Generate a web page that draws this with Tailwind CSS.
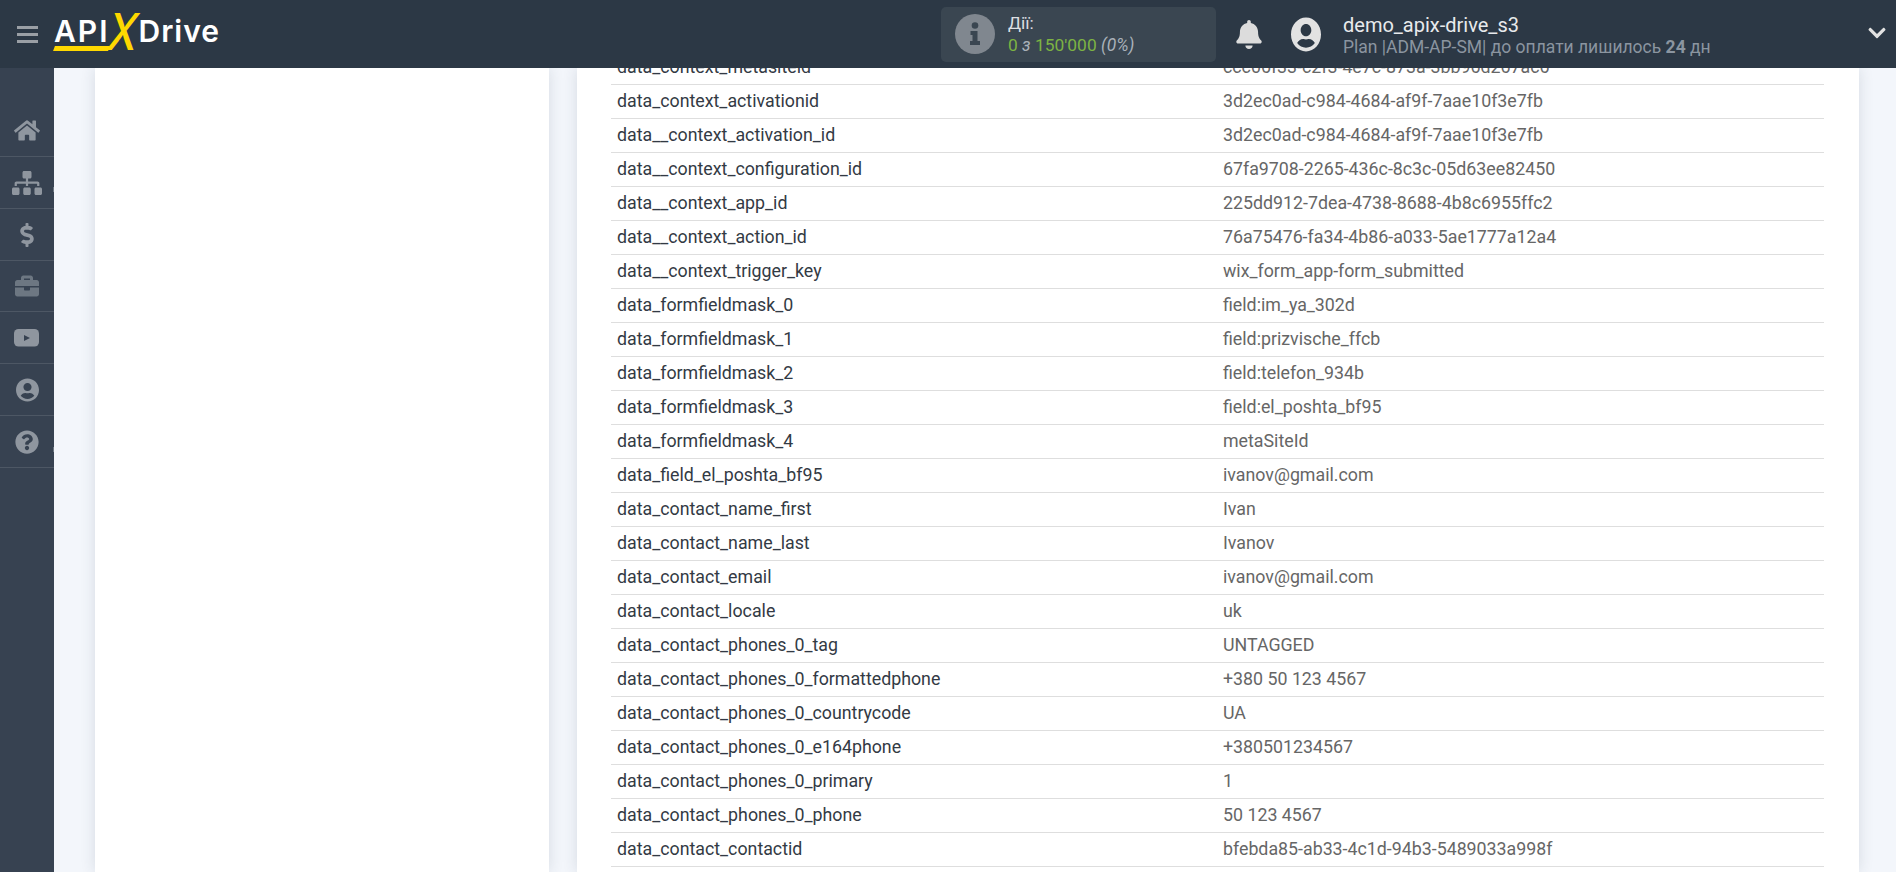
<!DOCTYPE html>
<html lang="en">
<head>
    <meta charset="UTF-8">
    <title>ApiX-Drive</title>
    <script src="https://cdn.jsdelivr.net/npm/@tailwindcss/browser@4"></script>
</head>
<body class="h-screen overflow-hidden bg-[#f3f6fb] font-['Roboto',sans-serif]">
    <!-- Header -->
    <header class="relative z-10 flex h-[68px] items-center bg-[#2c3845]">
        <div class="flex w-[54px] flex-col items-center gap-[4px]">
            <span class="h-[3px] w-[21px] bg-[#9a9fa5]"></span>
            <span class="h-[3px] w-[21px] bg-[#9a9fa5]"></span>
            <span class="h-[3px] w-[21px] bg-[#9a9fa5]"></span>
        </div>
        <div class="relative h-[68px] w-[887px] font-['Inter',sans-serif] text-white">
            <div class="flex h-full items-center pb-[6px] text-[30px] leading-none font-semibold">
                <span class="tracking-[2px]">API</span>
                <span class="w-[29px] origin-center scale-x-[1.4] scale-y-[1.7] skew-x-[-14deg] text-center font-medium text-[#ffd800]">X</span>
                <span class="tracking-[1px]">Drive</span>
            </div>
            <span class="absolute top-[46px] left-0 h-[5px] w-[55px] skew-x-[-20deg] bg-[#ffd800]"></span>
        </div>
        <!-- Actions counter -->
        <div class="flex h-[55px] w-[275px] items-center gap-[13px] rounded-[5px] bg-[#3a4651] pl-[14px]">
            <svg class="h-[40px] w-[40px]" viewBox="0 0 40 40">
                <circle cx="20" cy="20" r="20" fill="#80878f"/>
                <g fill="#3a4651"><circle cx="20" cy="11.5" r="3.3"/><path d="M15.5 17h7v10h2.5v4h-10v-4h2.5v-6h-2z"/></g>
            </svg>
            <div class="text-[17.4px] leading-[22px]">
                <div class="text-[#dcdfe2]">Дії:</div>
                <div class="text-[#7db343]">0 <i class="text-[#a9b1b9]">з</i> 150'000 <i class="text-[#a9b1b9]">(0%)</i></div>
            </div>
        </div>
        <svg class="ml-[20px] h-[29px] w-[26px]" viewBox="0 0 448 512" fill="#dcdcdc"><path d="M224 512c35.32 0 63.97-28.65 63.97-64H160.03c0 35.35 28.65 64 63.97 64zm215.39-149.71c-19.32-20.76-55.47-51.99-55.47-154.29 0-77.7-54.48-139.9-127.94-155.16V32c0-17.67-14.32-32-31.98-32s-31.98 14.33-31.98 32v20.84C118.56 68.1 64.08 130.3 64.08 208c0 102.3-36.15 133.53-55.47 154.29-6 6.45-8.66 14.16-8.61 21.71.11 16.4 12.98 32 32.1 32h383.8c19.12 0 32-15.6 32.1-32 .05-7.55-2.61-15.27-8.61-21.71z"/></svg>
        <svg class="ml-[29px] h-[35px] w-[30px]" viewBox="0 0 496 512" preserveAspectRatio="none" fill="#e2e2e2"><path d="M248 8C111 8 0 119 0 256s111 248 248 248 248-111 248-248S385 8 248 8zm0 96c48.6 0 88 39.4 88 88s-39.4 88-88 88-88-39.4-88-88 39.4-88 88-88zm0 344c-58.7 0-111.3-26.6-146.5-68.2 18.8-35.4 55.6-59.8 98.5-59.8 2.4 0 4.8.4 7.1 1.1 13 4.2 26.6 6.9 40.9 6.9 14.3 0 28-2.7 40.9-6.9 2.3-.7 4.7-1.1 7.1-1.1 42.9 0 79.7 24.4 98.5 59.8C359.3 421.4 306.7 448 248 448z"/></svg>
        <div class="ml-[22px] pt-[2px]">
            <div class="text-[20px] leading-[24px] text-[#e8eaec]">demo_apix-drive_s3</div>
            <div class="text-[17.5px] leading-[20px] text-[#8b95a0]">Plan |ADM-AP-SM| до оплати лишилось <b class="font-bold">24</b> дн</div>
        </div>
        <svg class="mr-[10px] mb-[2px] ml-auto h-[20px] w-[18px]" viewBox="0 0 448 512" fill="#e2e2e2"><path d="M207.029 381.476L12.686 187.132c-9.373-9.373-9.373-24.569 0-33.941l22.667-22.667c9.357-9.357 24.522-9.375 33.901-.04L224 284.505l154.745-154.021c9.379-9.335 24.544-9.317 33.901.04l22.667 22.667c9.373 9.373 9.373 24.569 0 33.941L240.971 381.476c-9.373 9.372-24.569 9.372-33.942 0z"/></svg>
    </header>

    <div class="flex h-[804px]">
        <!-- Sidebar -->
        <aside class="w-[54px] shrink-0 bg-[#374251] pt-[37px]">
            <div class="flex h-[52px] items-center justify-center border-b border-[#4d5764]">
                <svg class="h-[23px] w-[26px]" viewBox="0 0 576 512" fill="#8f969f"><path d="M280.37 148.26L96 300.11V464a16 16 0 0 0 16 16l112.06-.29a16 16 0 0 0 15.92-16V368a16 16 0 0 1 16-16h64a16 16 0 0 1 16 16v95.64a16 16 0 0 0 16 16.05L464 480a16 16 0 0 0 16-16V300L295.67 148.26a12.19 12.19 0 0 0-15.3 0zM571.6 251.47L488 182.56V44.05a12 12 0 0 0-12-12h-56a12 12 0 0 0-12 12v72.61L318.47 43a48 48 0 0 0-61 0L4.34 251.47a12 12 0 0 0-1.6 16.9l25.5 31A12 12 0 0 0 45.15 301l235.22-193.74a12.19 12.19 0 0 1 15.3 0L530.9 301a12 12 0 0 0 16.9-1.6l25.5-31a12 12 0 0 0-1.7-16.93z"/></svg>
            </div>
            <div class="relative flex h-[52px] items-center justify-center border-b border-[#4d5764]">
                <svg class="h-[24px] w-[30px]" viewBox="0 0 640 512" fill="#8f969f"><path d="M128 352H32c-17.67 0-32 14.33-32 32v96c0 17.67 14.33 32 32 32h96c17.67 0 32-14.33 32-32v-96c0-17.67-14.33-32-32-32zm-24-80h192v48h48v-48h192v48h48v-57.59c0-21.17-17.23-38.41-38.41-38.41H344v-64h40c17.67 0 32-14.33 32-32V32c0-17.67-14.33-32-32-32H256c-17.67 0-32 14.33-32 32v96c0 17.67 14.33 32 32 32h40v64H94.41C73.23 224 56 241.23 56 262.41V320h48v-48zm264 80h-96c-17.67 0-32 14.33-32 32v96c0 17.67 14.33 32 32 32h96c17.67 0 32-14.33 32-32v-96c0-17.67-14.33-32-32-32zm240 0h-96c-17.67 0-32 14.33-32 32v96c0 17.67 14.33 32 32 32h96c17.67 0 32-14.33 32-32v-96c0-17.67-14.33-32-32-32z"/></svg>
                <span class="absolute top-[30px] right-0 h-[5px] w-[1px] bg-[#6d7782]"></span>
            </div>
            <div class="flex h-[52px] items-center justify-center border-b border-[#4d5764]">
                <svg class="h-[24px] w-[14px]" viewBox="0 0 288 512" fill="#8f969f"><path d="M209.2 233.4l-108-31.6C88.7 198.2 80 186.5 80 173.5c0-16.3 13.2-29.5 29.5-29.5h66.3c12.2 0 24.2 3.7 34.2 10.5 6.1 4.1 14.3 3.1 19.5-2l34.8-34c7.1-6.9 6.1-18.4-1.8-24.5C238 74.8 207.4 64.1 176 64V16c0-8.8-7.2-16-16-16h-32c-8.8 0-16 7.2-16 16v48h-2.5C45.8 64-5.4 118.7.5 183.6c4.2 46.1 39.4 83.6 83.8 96.6l102.5 30c12.5 3.7 21.2 15.3 21.2 28.3 0 16.3-13.2 29.5-29.5 29.5h-66.3C100 368 88 364.3 78 357.5c-6.1-4.1-14.3-3.1-19.5 2l-34.8 34c-7.1 6.9-6.1 18.4 1.8 24.5 24.5 19.2 55.1 29.9 86.5 30v48c0 8.8 7.2 16 16 16h32c8.8 0 16-7.2 16-16v-48.2c46.6-.9 90.3-28.6 105.7-72.7 21.5-61.6-14.6-124.8-72.5-141.7z"/></svg>
            </div>
            <div class="flex h-[51px] items-center justify-center border-b border-[#4d5764]">
                <svg class="h-[24px] w-[24px]" viewBox="0 0 512 512" fill="#6d7782"><path d="M320 336c0 8.84-7.16 16-16 16h-96c-8.84 0-16-7.16-16-16v-48H0v144c0 25.6 22.4 48 48 48h416c25.6 0 48-22.4 48-48V288H320v48zm144-208h-80V80c0-25.6-22.4-48-48-48H176c-25.6 0-48 22.4-48 48v48H48c-25.6 0-48 22.4-48 48v80h512v-80c0-25.6-22.4-48-48-48zm-144 0H192V96h128v32z"/></svg>
            </div>
            <div class="flex h-[52px] items-center justify-center border-b border-[#4d5764]">
                <svg class="h-[18px] w-[26px]" viewBox="0 0 26 18"><rect width="25" height="17.5" rx="4.5" fill="#8f969f"/><path d="M10 6l6 3-6 3z" fill="#374251"/></svg>
            </div>
            <div class="flex h-[52px] items-center justify-center border-b border-[#4d5764]">
                <svg class="h-[24px] w-[23px]" viewBox="0 0 496 512" fill="#8f969f"><path d="M248 8C111 8 0 119 0 256s111 248 248 248 248-111 248-248S385 8 248 8zm0 96c48.6 0 88 39.4 88 88s-39.4 88-88 88-88-39.4-88-88 39.4-88 88-88zm0 344c-58.7 0-111.3-26.6-146.5-68.2 18.8-35.4 55.6-59.8 98.5-59.8 2.4 0 4.8.4 7.1 1.1 13 4.2 26.6 6.9 40.9 6.9 14.3 0 28-2.7 40.9-6.9 2.3-.7 4.7-1.1 7.1-1.1 42.9 0 79.7 24.4 98.5 59.8C359.3 421.4 306.7 448 248 448z"/></svg>
            </div>
            <div class="relative flex h-[52px] items-center justify-center border-b border-[#4d5764]">
                <svg class="h-[24px] w-[24px]" viewBox="0 0 512 512" fill="#8f969f"><path d="M504 256c0 136.997-111.043 248-248 248S8 392.997 8 256C8 119.083 119.043 8 256 8s248 111.083 248 248zM262.655 90c-54.497 0-89.255 22.957-116.549 63.758-3.536 5.286-2.353 12.415 2.715 16.258l34.699 26.31c5.205 3.947 12.621 3.008 16.665-2.122 17.864-22.658 30.113-35.797 57.303-35.797 20.429 0 45.698 13.148 45.698 32.958 0 14.976-12.363 22.667-32.534 33.976C247.128 238.528 216 254.941 216 296v4c0 6.627 5.373 12 12 12h56c6.627 0 12-5.373 12-12v-1.333c0-28.462 83.186-29.647 83.186-106.667 0-58.002-60.165-102-116.531-102zM256 338c-25.365 0-46 20.635-46 46 0 25.364 20.635 46 46 46s46-20.636 46-46c0-25.365-20.635-46-46-46z"/></svg>
                <span class="absolute top-[31px] right-0 h-[5px] w-[1px] bg-[#6d7782]"></span>
            </div>
        </aside>

        <!-- Content -->
        <main class="flex min-w-0 flex-1 overflow-hidden pl-[41px]">
            <div class="h-full w-[454px] shrink-0 bg-white shadow-[0_0_14px_rgba(40,55,75,0.14)]"></div>
            <div class="ml-[28px] h-full w-[1282px] shrink-0 bg-white px-[34px] shadow-[0_0_14px_rgba(40,55,75,0.14)]">
                <div id="rows" class="-mt-[17px] w-[1213px]"></div>
            </div>
        </main>
    </div>

    <script>
        const rows = [
            ['data_context_metasiteid', 'ccc06f33-c2f3-4e7c-873a-3bb96d267ac6'],
            ['data_context_activationid', '3d2ec0ad-c984-4684-af9f-7aae10f3e7fb'],
            ['data__context_activation_id', '3d2ec0ad-c984-4684-af9f-7aae10f3e7fb'],
            ['data__context_configuration_id', '67fa9708-2265-436c-8c3c-05d63ee82450'],
            ['data__context_app_id', '225dd912-7dea-4738-8688-4b8c6955ffc2'],
            ['data__context_action_id', '76a75476-fa34-4b86-a033-5ae1777a12a4'],
            ['data__context_trigger_key', 'wix_form_app-form_submitted'],
            ['data_formfieldmask_0', 'field:im_ya_302d'],
            ['data_formfieldmask_1', 'field:prizvische_ffcb'],
            ['data_formfieldmask_2', 'field:telefon_934b'],
            ['data_formfieldmask_3', 'field:el_poshta_bf95'],
            ['data_formfieldmask_4', 'metaSiteId'],
            ['data_field_el_poshta_bf95', 'ivanov@gmail.com'],
            ['data_contact_name_first', 'Ivan'],
            ['data_contact_name_last', 'Ivanov'],
            ['data_contact_email', 'ivanov@gmail.com'],
            ['data_contact_locale', 'uk'],
            ['data_contact_phones_0_tag', 'UNTAGGED'],
            ['data_contact_phones_0_formattedphone', '+380 50 123 4567'],
            ['data_contact_phones_0_countrycode', 'UA'],
            ['data_contact_phones_0_e164phone', '+380501234567'],
            ['data_contact_phones_0_primary', '1'],
            ['data_contact_phones_0_phone', '50 123 4567'],
            ['data_contact_contactid', 'bfebda85-ab33-4c1d-94b3-5489033a998f']
        ];

        document.getElementById('rows').innerHTML = rows.map(([key, value]) => `
            <div class="flex h-[34px] items-center border-b border-[#dedede] pb-[1px] text-[17.8px]">
                <div class="w-[612px] pl-[6px] text-[#333a44]">${key}</div>
                <div class="text-[#666666]">${value}</div>
            </div>
        `).join('');
    </script>
</body>
</html>
